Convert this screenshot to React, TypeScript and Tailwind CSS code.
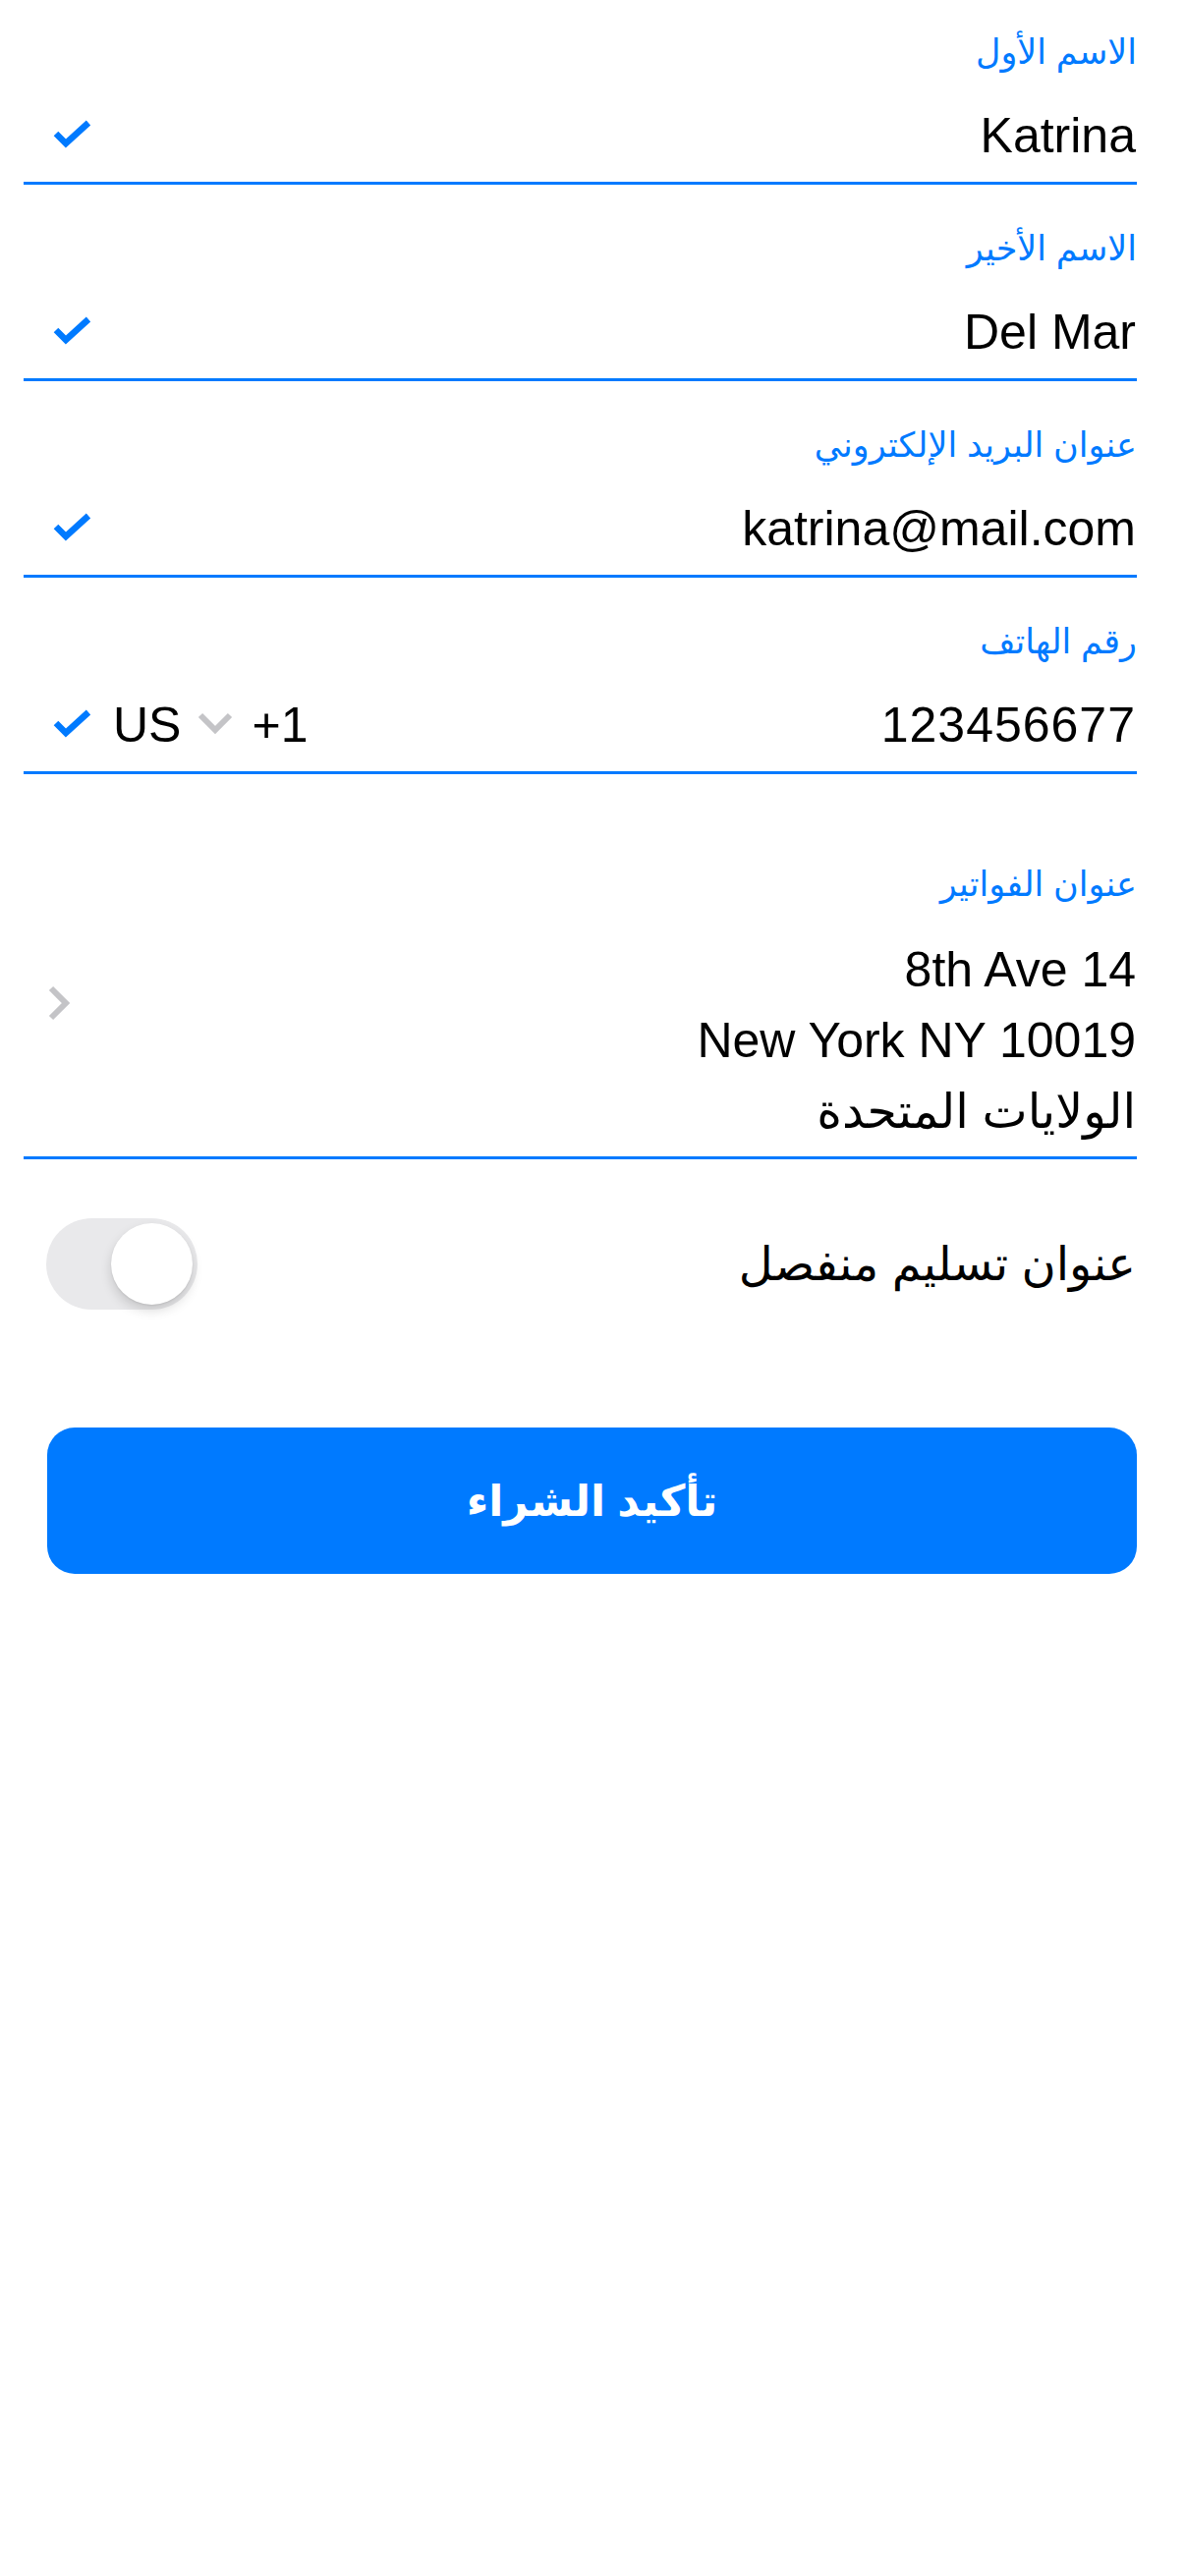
import React from "react";

const FONT = "font-['Liberation_Sans','DejaVu_Sans',sans-serif]";

function Check() {
  return (
    <svg width="46" height="36" viewBox="0 0 46 36" className="shrink-0 ml-[26px] -mt-[5px]">
      <polyline points="7,18 17,28 40,7" fill="none" stroke="#007AFF" strokeWidth="6.5" strokeLinecap="butt" strokeLinejoin="miter" />
    </svg>
  );
}

function Field({ label, value, first }: { label: string; value: string; first?: boolean }) {
  return (
    <div className={`flex flex-col border-b-[3px] border-[#007AFF] pb-[17px] ${first ? "pt-[31px]" : "pt-[43px]"}`}>
      <div dir="rtl" className="h-[44px] text-[35px] leading-[44px] text-[#007AFF] text-right">{label}</div>
      <div className="mt-[33px] h-[60px] flex items-center justify-between">
        <Check />
        <div className="text-[50px] leading-[60px] text-black pr-[1px]">{value}</div>
      </div>
    </div>
  );
}

export default function App() {
  return (
    <div className={`min-h-screen bg-white ${FONT} w-[1206px]`}>
      <div className="ml-[24px] mr-[49px]">
        <Field first label="الاسم الأول" value="Katrina" />
        <Field label="الاسم الأخير" value="Del Mar" />
        <Field label="عنوان البريد الإلكتروني" value="katrina@mail.com" />

        {/* phone */}
        <div className="flex flex-col border-b-[3px] border-[#007AFF] pb-[17px] pt-[43px]">
          <div dir="rtl" className="h-[44px] text-[35px] leading-[44px] text-[#007AFF] text-right">رقم الهاتف</div>
          <div className="mt-[33px] h-[60px] flex items-center justify-between">
            <div className="flex items-center">
              <Check />
              <span className="ml-[19px] text-[50px] leading-[60px] text-black">US</span>
              <svg width="40" height="24" viewBox="0 0 40 24" className="ml-[15px] -mt-[6px]">
                <polyline points="5,5 20,20 35,5" fill="none" stroke="#C4C4C7" strokeWidth="6" strokeLinecap="butt" strokeLinejoin="miter" />
              </svg>
              <span className="ml-[17px] text-[50px] leading-[60px] text-black">+1</span>
            </div>
            <div className="text-[50px] leading-[60px] text-black pr-[1px] tracking-[1px]">123456677</div>
          </div>
        </div>

        {/* billing */}
        <div className="flex flex-col border-b-[3px] border-[#007AFF] pt-[90px] pb-[10px]">
          <div dir="rtl" className="h-[44px] text-[35px] leading-[44px] text-[#007AFF] text-right">عنوان الفواتير</div>
          <div className="mt-[29px] flex items-start justify-between">
            <svg width="24" height="40" viewBox="0 0 24 40" className="ml-[24px] mt-[50px] shrink-0">
              <polyline points="4,5 19,20 4,35" fill="none" stroke="#C4C4C7" strokeWidth="6" strokeLinecap="butt" strokeLinejoin="miter" />
            </svg>
            <div className="flex flex-col items-end text-[50px] leading-[72px] text-black pr-[1px]">
              <div>8th Ave 14</div>
              <div>New York NY 10019</div>
              <div dir="rtl" className="text-[49px]">الولايات المتحدة</div>
            </div>
          </div>
        </div>

        {/* toggle row */}
        <div className="mt-[60px] flex items-center justify-between">
          <div className="ml-[23px] relative w-[154px] h-[93px] rounded-full bg-[#E9E9EB]">
            <div className="absolute left-[66px] top-[5px] w-[83px] h-[83px] rounded-full bg-white shadow-[0_6px_12px_rgba(0,0,0,0.15),0_1px_2px_rgba(0,0,0,0.08)]" />
          </div>
          <div dir="rtl" className="text-[48px] leading-[60px] text-black pr-[1px]">عنوان تسليم منفصل</div>
        </div>

        {/* button */}
        <button className="mt-[120px] ml-[24px] w-[1109px] h-[149px] rounded-[28px] bg-[#007AFF] flex items-center justify-center">
          <span dir="rtl" className="text-[44px] font-bold text-white leading-[60px]">تأكيد الشراء</span>
        </button>
      </div>
    </div>
  );
}
